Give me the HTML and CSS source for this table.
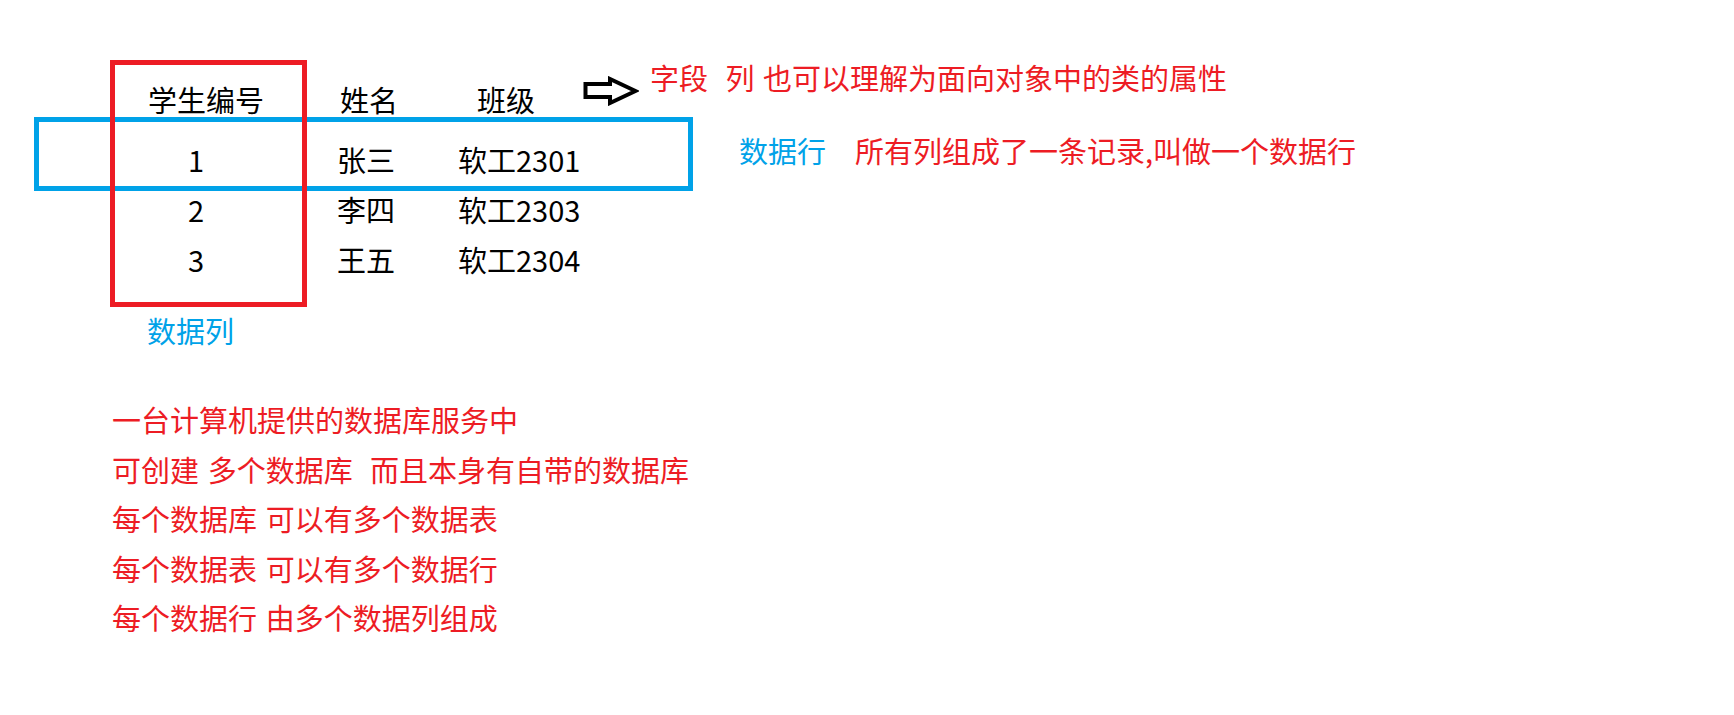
FILE: index.html
```html
<!DOCTYPE html>
<html lang="zh-CN">

<head>
    <meta charset="UTF-8">
    <meta name="viewport" content="width=device-width, initial-scale=1.0">
    <title>数据库 数据行 数据列</title>
    <link rel="stylesheet" href="styles.css">
</head>

<body>
    <div class="page">
        <!-- frames drawn over the table -->
        <div class="frame frame-row"></div>
        <div class="frame frame-col"></div>

        <div class="data-table">
            <div class="th th-id">学生编号</div>
            <div class="th th-name">姓名</div>
            <div class="th th-class">班级</div>
            <div class="field-note">
                <svg class="arrow" width="56" height="30" viewBox="0 0 56 30">
                    <polygon points="2.5,8 27,8 27,3 52.5,15 27,27 27,21 2.5,21" fill="#fff" stroke="#000" stroke-width="4" stroke-linejoin="miter" />
                </svg>
                <span class="note-red">字段  列 也可以理解为面向对象中的类的属性</span>
            </div>

            <div class="td td-id">1</div>
            <div class="td">张三</div>
            <div class="td">软工2301</div>
            <div class="row-note">
                <span class="note-blue">数据行</span>
                <span class="note-red row-note-text">所有列组成了一条记录,叫做一个数据行</span>
            </div>

            <div class="td td-id">2</div>
            <div class="td">李四</div>
            <div class="td">软工2303</div>
            <div></div>

            <div class="td td-id">3</div>
            <div class="td">王五</div>
            <div class="td">软工2304</div>
            <div></div>
        </div>

        <div class="col-label note-blue">数据列</div>

        <div class="summary">
            <p>一台计算机提供的数据库服务中</p>
            <p>可创建 多个数据库  而且本身有自带的数据库</p>
            <p>每个数据库 可以有多个数据表</p>
            <p>每个数据表 可以有多个数据行</p>
            <p>每个数据行 由多个数据列组成</p>
        </div>
    </div>
</body>

</html>
```

FILE: styles.css
```css
body {
    margin: 0;
    font-family: "Noto Sans CJK SC", "Noto Sans", sans-serif;
    font-size: 29px;
    color: #000000;
    background-color: #ffffff;
}

.page {
    position: relative;
    padding-top: 74px;
    height: 641px;
    word-spacing: 2.2px;
}

.frame {
    position: absolute;
    box-sizing: border-box;
    border: 5px solid;
}

.frame-col {
    left: 110px;
    top: 60px;
    width: 197px;
    height: 247px;
    border-color: #ed1c24;
    z-index: 2;
}

.frame-row {
    left: 34px;
    top: 117px;
    width: 659px;
    height: 74px;
    border-color: #00a2e8;
    z-index: 1;
}

.data-table {
    display: grid;
    grid-template-columns: 189px 121px 125px auto;
    grid-template-rows: 60px 50px 50px 50px;
    margin-left: 148px;
    line-height: 50px;
}

.th-name {
    padding-left: 3px;
}

.th-class {
    padding-left: 19px;
}

.td-id {
    padding-left: 40px;
}

.field-note {
    display: flex;
    align-items: flex-start;
    margin-top: -22px;
}

.arrow {
    margin-top: 24px;
    margin-right: 11px;
    flex-shrink: 0;
}

.row-note {
    display: flex;
    margin-top: -9px;
    padding-left: 156px;
}

.row-note-text {
    margin-left: 29px;
}

.note-red {
    color: #ed1c24;
    white-space: pre;
}

.note-blue {
    color: #00a2e8;
}

.col-label {
    margin: 21px 0 0 147px;
    line-height: 50px;
}

.summary {
    margin: 40px 0 0 112px;
    color: #ed1c24;
    line-height: 49.5px;
}

.summary p {
    margin: 0;
    white-space: pre;
}
```
